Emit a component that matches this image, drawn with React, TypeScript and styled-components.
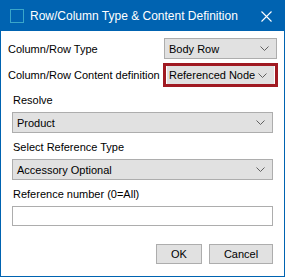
import styled, { createGlobalStyle } from "styled-components";

const GlobalStyle = createGlobalStyle`
  html, body {
    margin: 0;
    padding: 0;
    background: #ffffff;
  }
  * {
    box-sizing: border-box;
  }
`;

const blue = "#0063b1";

const Chevron = () => (
  <svg width="9" height="5" viewBox="0 0 9 5">
    <path d="M0.5 0.5 L4.5 4.5 L8.5 0.5" fill="none" stroke="#606060" strokeWidth="1" />
  </svg>
);

const App = () => {
  return (
    <>
      <GlobalStyle />
      <Window>
        <TitleBar>
          <AppIcon />
          <TitleText>Row/Column Type &amp; Content Definition</TitleText>
          <CloseButton>
            <svg width="11" height="11" viewBox="0 0 11 11">
              <path d="M0.5 0.5 L10.5 10.5 M10.5 0.5 L0.5 10.5" stroke="#ffffff" strokeWidth="1.1" />
            </svg>
          </CloseButton>
        </TitleBar>
        <Body>
          <TopSection>
            <Row>
              <Label>Column/Row Type</Label>
              <Select $width={113}>
                <span>Body Row</span>
                <Chevron />
              </Select>
            </Row>
            <Row>
              <Label>Column/Row Content definition</Label>
              <Highlight>
                <Select $inner>
                  <span>Referenced Node</span>
                  <Chevron />
                </Select>
              </Highlight>
            </Row>
          </TopSection>
          <LowerSection>
            <FieldLabel>Resolve</FieldLabel>
            <Select>
              <span>Product</span>
              <Chevron />
            </Select>
            <FieldLabel>Select Reference Type</FieldLabel>
            <Select>
              <span>Accessory Optional</span>
              <Chevron />
            </Select>
            <FieldLabel>Reference number (0=All)</FieldLabel>
            <TextInput />
            <ButtonRow>
              <Button $width={46}>OK</Button>
              <Button $width={64}>Cancel</Button>
            </ButtonRow>
          </LowerSection>
        </Body>
      </Window>
    </>
  );
};

const Window = styled.div`
  width: 285px;
  height: 277px;
  border: 1px solid ${blue};
  display: flex;
  flex-direction: column;
  background: #ffffff;
  font-family: "Liberation Sans", Arial, sans-serif;
  font-size: 11px;
  color: #000000;
`;

const TitleBar = styled.div`
  height: 30px;
  background: ${blue};
  display: flex;
  align-items: center;
  padding-left: 9px;
  color: #ffffff;
`;

const AppIcon = styled.div`
  width: 14px;
  height: 14px;
  border: 1px solid #3aa6c9;
  margin-right: 6px;
`;

const TitleText = styled.div`
  flex: 1;
  font-size: 12px;
  white-space: nowrap;
`;

const CloseButton = styled.div`
  width: 30px;
  height: 30px;
  margin-right: 3px;
  display: flex;
  align-items: center;
  justify-content: center;
`;

const Body = styled.div`
  flex: 1;
  display: flex;
  flex-direction: column;
`;

const TopSection = styled.div`
  padding: 7px 7px 0 7px;
  display: flex;
  flex-direction: column;
  gap: 4px;
`;

const Row = styled.div`
  display: flex;
  align-items: center;
  justify-content: space-between;
`;

const Label = styled.span`
  white-space: nowrap;
`;

const Highlight = styled.div`
  flex-shrink: 0;
  width: 115px;
  border: 3px solid #a01a22;
  margin-right: -1px;
  padding: 0 1px;
`;

const Select = styled.div<{ $width?: number; $inner?: boolean }>`
  width: ${(p) => (p.$width ? `${p.$width}px` : "100%")};
  height: ${(p) => (p.$inner ? "18px" : "21px")};
  background: #e1e1e1;
  border: ${(p) => (p.$inner ? "none" : "1px solid #adadad")};
  display: flex;
  align-items: center;
  justify-content: space-between;
  padding: 0 7px 0 ${(p) => (p.$inner ? "2px" : "4px")};
  white-space: nowrap;
`;

const LowerSection = styled.div`
  padding: 5px 11px 0 11px;
  display: flex;
  flex-direction: column;
`;

const FieldLabel = styled.div`
  height: 16px;
  line-height: 16px;
  margin: 0 0 4px 1px;

  & + div {
    margin-bottom: 6px;
  }
`;

const TextInput = styled.div`
  height: 20px;
  border: 1px solid #adadad;
  background: #ffffff;
`;

const ButtonRow = styled.div`
  display: flex;
  justify-content: flex-end;
  gap: 7px;
  margin-top: 12px;
`;

const Button = styled.div<{ $width: number }>`
  width: ${(p) => p.$width}px;
  height: 20px;
  background: #e1e1e1;
  border: 1px solid #adadad;
  display: flex;
  align-items: center;
  justify-content: center;
`;

export default App;
